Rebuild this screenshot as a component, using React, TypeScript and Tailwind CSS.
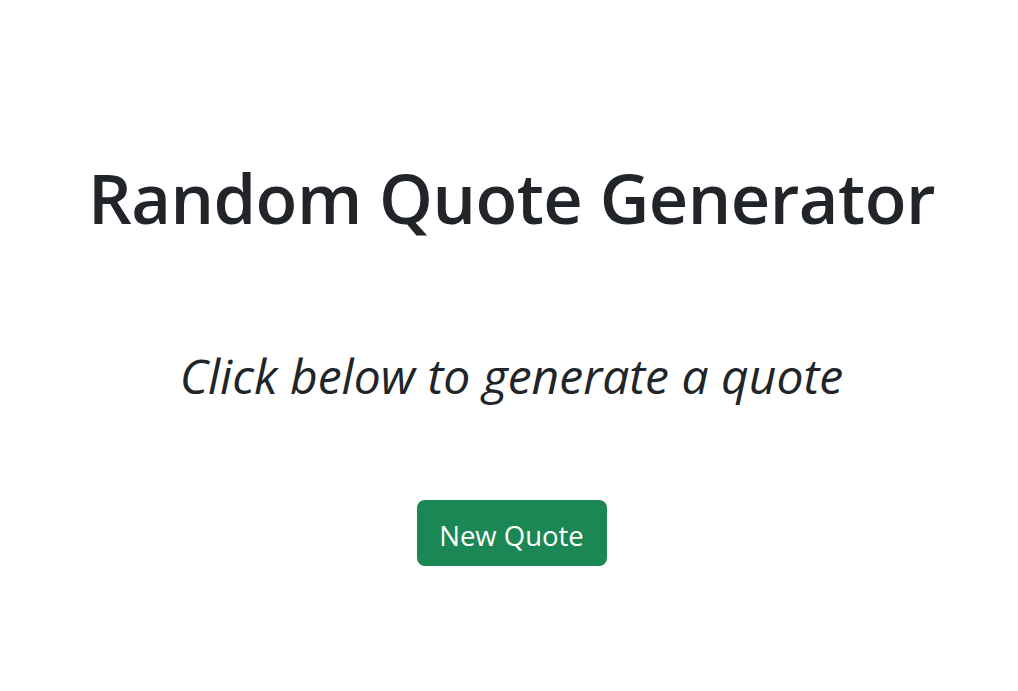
export default function App() {
  return (
    <div className="min-h-[691px] w-full bg-white font-['Open_Sans',sans-serif] text-[#212529]">
      <div className="flex flex-col items-center pl-[5px] pt-[156px]">
        <h1 className="text-[68.5px] font-semibold leading-[84px] tracking-[-0.5px]">Random Quote Generator</h1>
        <p className="mt-[106px] text-[48px] italic leading-[60px]">Click below to generate a quote</p>
        <button className="mt-[94px] h-[66px] w-[190px] rounded-[8px] bg-[#1b8754] pt-[6px] text-[27.5px] text-white">
          New Quote
        </button>
      </div>
    </div>
  );
}
